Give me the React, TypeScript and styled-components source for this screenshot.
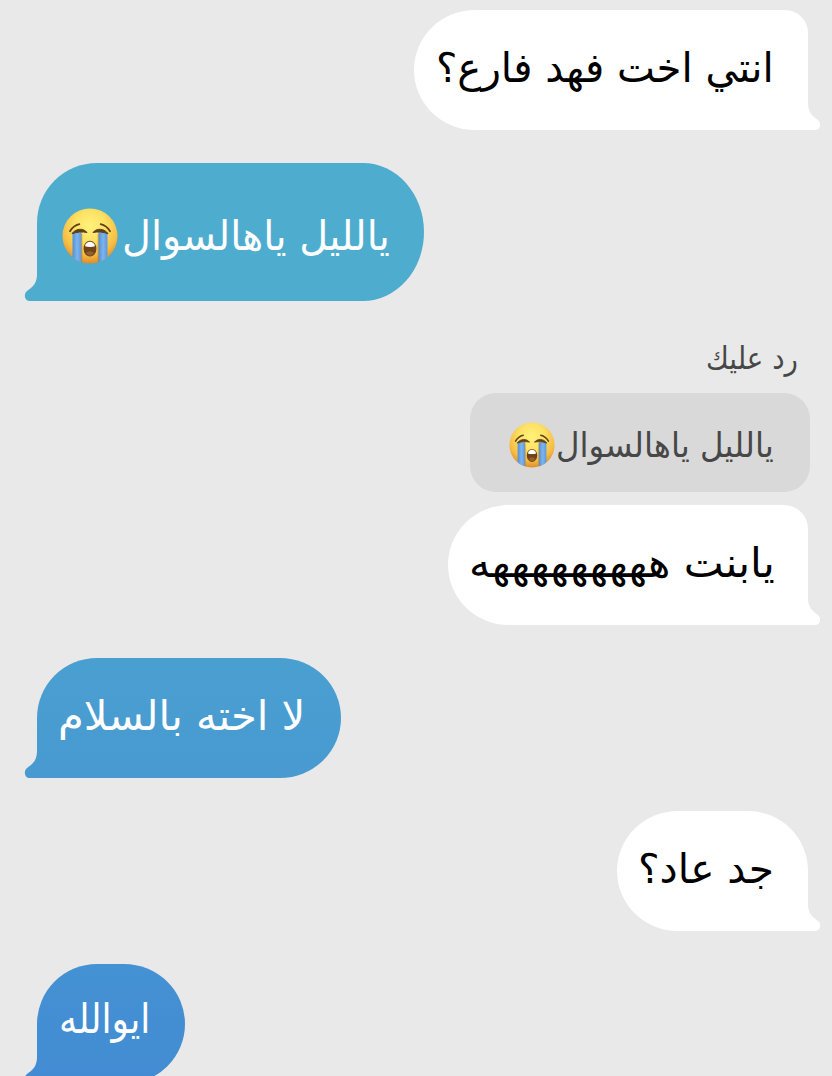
import React, { useLayoutEffect, useRef, useState } from "react";
import styled, { createGlobalStyle, css } from "styled-components";

const GlobalStyle = createGlobalStyle`
  * { box-sizing: border-box; }
  html, body { margin: 0; background: #e9e9e9; }
  body { overflow: hidden; }
`;

const Thread = styled.main`
  width: 832px;
  height: 1076px;
  overflow: hidden;
  padding: 10.3px 23.7px 0 37.3px;
  display: flex;
  flex-direction: column;
  background: #e9e9e9;
  font-family: "DejaVu Sans", sans-serif;
`;

type Side = "in" | "out";

const Row = styled.div<{ $side: Side; $gap?: number }>`
  display: flex;
  flex-shrink: 0;
  justify-content: ${(p) => (p.$side === "in" ? "flex-end" : "flex-start")};
  margin-top: ${(p) => p.$gap ?? 33}px;
`;

const BubbleBox = styled.div<{
  $side: Side;
  $w: number;
  $h?: number;
  $fill: string;
  $corner?: number;
  $inset: number;
  $lift: number;
}>`
  position: relative;
  width: ${(p) => p.$w}px;
  height: ${(p) => p.$h ?? 120}px;
  display: flex;
  flex-direction: row;
  align-items: center;
  direction: rtl;
  padding: ${(p) => Math.max(0, -p.$lift)}px ${(p) => p.$inset}px ${(p) => Math.max(0, p.$lift)}px 0;
  background: ${(p) => p.$fill};
  ${(p) =>
    p.$side === "in"
      ? css`
          color: #000;
          border-radius: 61px ${p.$corner ?? 60}px 0 61px / 60px ${p.$corner ?? 60}px 0 60px;
        `
      : css`
          color: #fff;
          border-radius: 60px 61px 61px 0 / 60px 50% 50% 0;
        `}
`;

const TailShape = styled.svg<{ $side: Side }>`
  position: absolute;
  bottom: 0;
  width: 14px;
  height: 26px;
  overflow: visible;
  ${(p) => (p.$side === "in" ? "right: -13px;" : "left: -13px; transform: scaleX(-1);")}
`;

const Tail = ({ side, fill }: { side: Side; fill: string }) => (
  <TailShape $side={side} viewBox="0 0 14 26" aria-hidden>
    <path
      d="M0 0H1C1.200 5 2.600 8.500 5.500 11.500C8 14.500 10.300 14.800 12 17C14.600 20.800 12.600 26 8.200 26H0Z"
      fill={fill}
    />
  </TailShape>
);

const Measure = styled.span<{ $width: number; $size: number }>`
  display: block;
  flex: none;
  width: ${(p) => p.$width}px;
  font-size: ${(p) => p.$size}px;
  line-height: 56px;
  direction: rtl;
`;

const Glyphs = styled.span`
  display: inline-block;
  white-space: nowrap;
  transform-origin: 100% 50%;
`;

/* Arabic line whose glyph run is condensed or widened to a given measure. */
const Line = ({ text, width, size = 41 }: { text: string; width: number; size?: number }) => {
  const ref = useRef<HTMLSpanElement>(null);
  const [scale, setScale] = useState(1);
  useLayoutEffect(() => {
    if (ref.current) setScale(width / ref.current.offsetWidth);
  }, [text, width, size]);
  return (
    <Measure $width={width} $size={size}>
      <Glyphs ref={ref} style={{ transform: `scaleX(${scale})` }}>
        {text}
      </Glyphs>
    </Measure>
  );
};

const Face = styled.svg<{ $size: number }>`
  flex: none;
  width: ${(p) => p.$size}px;
  height: ${(p) => p.$size}px;
  margin-right: ${(p) => (p.$size > 50 ? 3.5 : 1)}px;
`;

const Crying = ({ size, id }: { size: number; id: string }) => (
  <Face $size={size} viewBox="0 0 56 56" role="img" aria-label="😭">
    <defs>
      <radialGradient id={`${id}-skin`} cx="50%" cy="32%" r="70%">
        <stop offset="0" stopColor="#fff27c" />
        <stop offset="0.4" stopColor="#fde264" />
        <stop offset="0.75" stopColor="#f6bb42" />
        <stop offset="1" stopColor="#dc8626" />
      </radialGradient>
      <linearGradient id={`${id}-tear`} x1="0" y1="0" x2="1" y2="0">
        <stop offset="0" stopColor="#4f90dc" />
        <stop offset="0.5" stopColor="#7db4ec" />
        <stop offset="1" stopColor="#5a9ae2" />
      </linearGradient>
      <clipPath id={`${id}-clip`}>
        <circle cx="28" cy="28" r="27.500" />
      </clipPath>
    </defs>
    <circle cx="28" cy="28" r="27.500" fill={`url(#${id}-skin)`} />
    <g clipPath={`url(#${id}-clip)`}>
      <path d="M10.500 24.500H19.500V56H10.500Z" fill={`url(#${id}-tear)`} />
      <path d="M36.500 24.500H45.500V56H36.500Z" fill={`url(#${id}-tear)`} />
      <path d="M19.800 26V56M36.200 26V56" stroke="#b07f38" strokeWidth="0.7" fill="none" />
    </g>
    <g fill="none" stroke="#60401a" strokeLinecap="round">
      <path d="M8 23.300C10 19.800 13 17.200 17.300 16.200" strokeWidth="1.8" />
      <path d="M48 23.300C46 19.800 43 17.200 38.700 16.200" strokeWidth="1.8" />
    </g>
    <path
      d="M10 25.700C13.500 20.300 21.500 19.800 25 24.500C20.500 23.600 14.500 24 10 25.700Z"
      fill="#60401a"
      stroke="#60401a"
      strokeWidth="1"
      strokeLinejoin="round"
    />
    <path
      d="M46 25.700C42.500 20.300 34.500 19.800 31 24.500C35.500 23.600 41.500 24 46 25.700Z"
      fill="#60401a"
      stroke="#60401a"
      strokeWidth="1"
      strokeLinejoin="round"
    />
    <ellipse cx="28" cy="40.700" rx="6.400" ry="7.900" fill="#70441b" />
    <path d="M23 38.300C23.700 32.300 32.300 32.300 33 38.300Q28 39.800 23 38.300Z" fill="#fff" />
    <path d="M23.800 45Q28 41.500 32.200 45Q28 50.500 23.800 45Z" fill="#94602f" />
  </Face>
);

const ReplyLabel = styled.div`
  display: flex;
  justify-content: flex-start;
  direction: rtl;
  flex-shrink: 0;
  height: 56px;
  margin-top: 29px;
  padding-right: 10px;
  color: #474747;
`;

const Quote = styled.div`
  display: flex;
  flex-shrink: 0;
  align-items: center;
  align-self: flex-end;
  direction: rtl;
  width: 340px;
  height: 99px;
  margin: 7px -1.7px 0 0;
  padding: 5px 36px 0 0;
  border-radius: 26px;
  background: #d9d9d9;
  color: #474747;
`;

interface BubbleProps {
  side: Side;
  w: number;
  h?: number;
  gap?: number;
  lift?: number;
  fill: string;
  tail?: string;
  corner?: number;
  inset: number;
  children: React.ReactNode;
}

const Bubble = ({ side, w, h, gap, lift = 5, fill, tail, corner, inset, children }: BubbleProps) => (
  <Row $side={side} $gap={gap}>
    <BubbleBox $side={side} $w={w} $h={h} $fill={fill} $corner={corner} $inset={inset} $lift={lift}>
      {children}
      <Tail side={side} fill={tail ?? fill} />
    </BubbleBox>
  </Row>
);

export default function App() {
  return (
    <>
      <GlobalStyle />
      <Thread>
        <Bubble side="in" w={394} gap={0} fill="#fff" corner={23} inset={34.5}>
          <Line text="انتي اخت فهد فارع؟" width={338} />
        </Bubble>
        <Bubble side="out" w={387} h={138} lift={-7} fill="#4eadcf" inset={34.5}>
          <Line text="يالليل ياهالسوال" width={268} />
          <Crying size={56} id="sent" />
        </Bubble>
        <ReplyLabel>
          <Line text="رد عليك" width={92} size={31} />
        </ReplyLabel>
        <Quote>
          <Line text="يالليل ياهالسوال" width={218} size={34} />
          <Crying size={46} id="quoted" />
        </Quote>
        <Bubble side="in" w={360} gap={13} fill="#fff" corner={24} inset={34}>
          <Line text="يابنت هههههههههه" width={306} />
        </Bubble>
        <Bubble
          side="out"
          w={304}
          fill="linear-gradient(#4a9fd1, #489ad0)"
          tail="#489ad0"
          inset={36}
        >
          <Line text="لا اخته بالسلام" width={247} />
        </Bubble>
        <Bubble side="in" w={191} fill="#fff" inset={34}>
          <Line text="جد عاد؟" width={136} />
        </Bubble>
        <Bubble
          side="out"
          w={148}
          lift={10}
          fill="linear-gradient(#4491d3, #438cd3)"
          tail="#438cd3"
          inset={35}
        >
          <Line text="ايوالله" width={91} />
        </Bubble>
      </Thread>
    </>
  );
}
